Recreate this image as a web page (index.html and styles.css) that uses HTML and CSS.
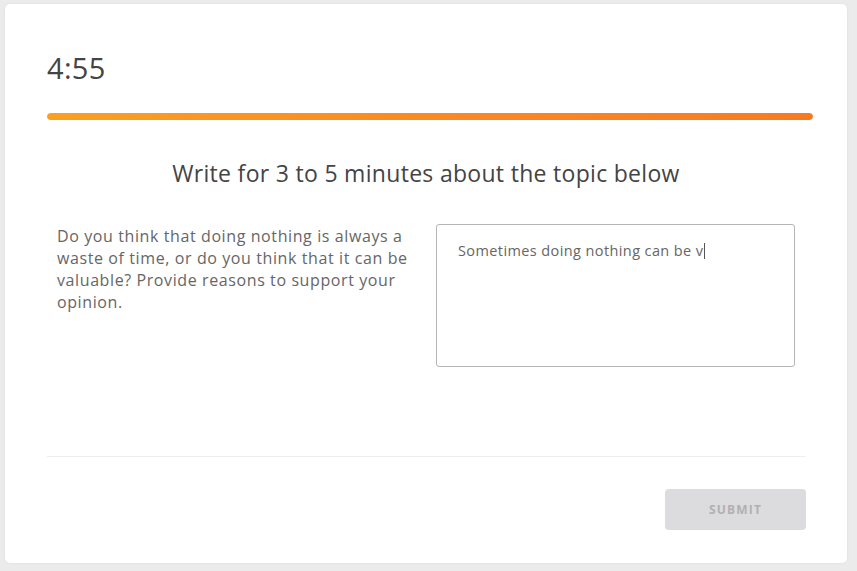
FILE: index.html
```html
<!DOCTYPE html>
<html>
<head>
  <title>Writing Task</title>
  <link rel="stylesheet" href="styles.css">
</head>
<body>
  <div class="card">
    <div class="timer">4:55</div>
    <div class="progress"><div class="progress-fill" style="width: 100%;"></div></div>

    <h2 class="task-title">Write for 3 to 5 minutes about the topic below</h2>

    <div class="task-body">
      <p class="prompt">Do you think that doing nothing is always a waste of time, or do you think that it can be valuable? Provide reasons to support your opinion.</p>
      <div class="answer">Sometimes doing nothing can be v<span class="caret"></span></div>
    </div>

    <div class="footer">
      <button class="submit" disabled>Submit</button>
    </div>
  </div>
</body>
</html>
```

FILE: styles.css
```css
body {
  margin: 0;
  padding: 4px 10px 8px 5px;
  background-color: #ebebeb;
  font-family: "Open Sans", Lato, sans-serif;
  color: #444;
}
.card {
  background-color: #fff;
  border-radius: 5px;
  box-shadow: 0 0 3px rgba(0, 0, 0, 0.06);
  height: 559px;
  box-sizing: border-box;
  padding: 47px 34px 0 42px;
}
.timer {
  font-size: 29px;
  line-height: 34px;
  letter-spacing: 0.3px;
  color: #444;
}
.progress {
  margin-top: 28px;
  height: 7px;
  border-radius: 4px;
  background-color: #eee;
  overflow: hidden;
}
.progress-fill {
  height: 100%;
  border-radius: 4px;
  background: linear-gradient(to right, #f9a021, #fa8a22 50%, #f77a22);
}
.task-title {
  margin: 38px 0 0;
  padding-right: 8px;
  font-size: 23px;
  font-weight: normal;
  line-height: 30px;
  letter-spacing: 0.3px;
  text-align: center;
  color: #444;
}
.task-body {
  display: flex;
  margin-top: 36px;
  padding-left: 10px;
}
.prompt {
  width: 370px;
  margin: 1px 0 0;
  font-size: 16px;
  line-height: 22px;
  letter-spacing: 0.6px;
  color: #666;
}
.answer {
  width: 359px;
  height: 143px;
  margin-left: 9px;
  box-sizing: border-box;
  border: 1px solid #b5b5b5;
  border-radius: 3px;
  padding: 16px 21px;
  font-size: 14.5px;
  line-height: 20px;
  letter-spacing: 0.4px;
  color: #666;
}
.caret {
  display: inline-block;
  width: 1px;
  height: 16px;
  margin-left: 1px;
  vertical-align: -3px;
  background-color: #555;
}
.footer {
  margin-top: 89px;
  margin-right: 7px;
  border-top: 1px solid #eee;
  padding-top: 32px;
  display: flex;
  justify-content: flex-end;
}
.submit {
  width: 141px;
  height: 41px;
  border: none;
  border-radius: 4px;
  background-color: #dcdcde;
  color: #b0b0b2;
  font-family: "Open Sans", sans-serif;
  font-size: 12px;
  font-weight: bold;
  letter-spacing: 1.2px;
  text-transform: uppercase;
}
```
